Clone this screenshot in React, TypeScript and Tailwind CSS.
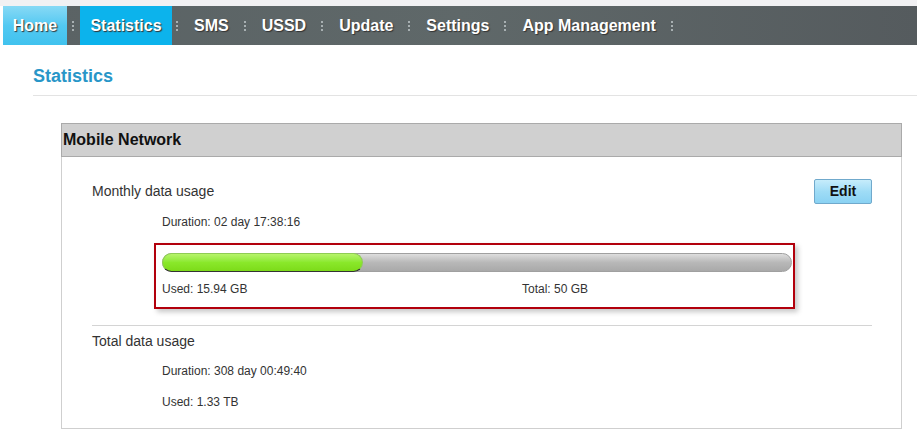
import React from 'react';

const navItems = ['Home', 'Statistics', 'SMS', 'USSD', 'Update', 'Settings', 'App Management'];

function Sep({ className }: { className: string }) {
  return <span className={`h-[10px] w-0 border-l-2 border-dotted border-[#a8b0b2] ${className}`} />;
}

export default function App() {
  return (
    <div className="w-[917px] h-[448px] bg-white overflow-hidden font-['Liberation_Sans',Arial,sans-serif] text-[#333]">
      {/* top strip */}
      <div className="h-[6px] bg-[#f1f1f3]" />

      {/* nav */}
      <div className="ml-[3px] h-[39px] flex items-center bg-gradient-to-r from-[#5a6264] via-[#5f6869] to-[#555b5e]">
        {navItems.map((item, i) => (
          <React.Fragment key={item}>
            <div
              className={`h-full flex items-center text-[16px] font-bold text-white [text-shadow:1px_1px_1px_#333] ${
                i === 0
                  ? 'w-[64px] justify-center bg-gradient-to-b from-[#86d9f5] via-[#52c9f2] to-[#40c2ee]'
                  : i === 1
                  ? 'w-[92px] justify-center bg-[#0cb3ec]'
                  : ''
              }`}
            >
              {item}
            </div>
            <Sep className={i === 0 ? 'ml-[5px] mr-[6px]' : i === 1 ? 'ml-[4px] mr-[16px]' : 'ml-[15px] mr-[16px]'} />
          </React.Fragment>
        ))}
      </div>

      {/* page heading */}
      <div className="ml-[33px] mt-[21px] pb-[9px] border-b border-[#e3e3e3]">
        <h1 className="text-[18px] leading-[20px] font-bold text-[#2896c8]">Statistics</h1>
      </div>

      {/* panel */}
      <div className="ml-[61px] mt-[27px] w-[841px] h-[306px] border border-[#cfcfcf] border-t-0">
        <div className="h-[34px] bg-[#d0d0d0] border border-[#aaaaaa] -mx-px flex items-center pl-[1px]">
          <span className="text-[16px] font-bold text-[#111]">Mobile Network</span>
        </div>

        <div className="pl-[30px] pr-[29px]">
          <div className="flex items-center justify-between mt-[21px] h-[26px]">
            <span className="text-[14px] text-[#333]">Monthly data usage</span>
            <button className="w-[58px] h-[25px] rounded-[2px] border border-[#70a9cc] bg-gradient-to-b from-[#c6ecfb] via-[#9fdcf6] to-[#8ad2f3] text-[14px] font-bold text-[#111]">
              Edit
            </button>
          </div>

          <div className="mt-[11px] pl-[70px] text-[12px] leading-[14px]">Duration: 02 day 17:38:16</div>

          <div className="mt-[14px] ml-[62px] w-[641px] h-[66px] border-2 border-[#b2000c] shadow-[3px_3px_5px_#c8c8c8] pl-[6px] pr-px pt-[8px]">
            <div className="relative h-[19px] rounded-full bg-gradient-to-b from-[#dedede] via-[#b8b8b8] to-[#a9a9a9] border border-[#a0a0a0]">
              <div className="absolute left-[-1px] top-[-1px] h-[19px] w-[201px] rounded-full bg-gradient-to-b from-[#b6f46a] via-[#8ae82a] to-[#7ddb18] border border-[#8fcc55] border-b-[#333]" />
            </div>
            <div className="flex mt-[10px] text-[12px] leading-[14px]">
              <span className="w-[360px]">Used: 15.94 GB</span>
              <span>Total: 50 GB</span>
            </div>
          </div>

          <div className="mt-[16px] border-t border-[#d4d4d4]" />

          <div className="mt-[7px] text-[14px] leading-[16px]">Total data usage</div>
          <div className="mt-[15px] pl-[70px] text-[12px] leading-[14px]">Duration: 308 day 00:49:40</div>
          <div className="mt-[17px] pl-[70px] text-[12px] leading-[14px]">Used: 1.33 TB</div>
        </div>
      </div>
    </div>
  );
}
